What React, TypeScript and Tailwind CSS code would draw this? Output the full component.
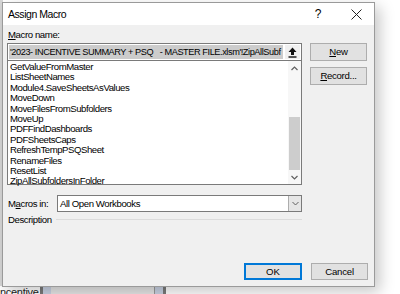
import React from "react";

const items = [
  "GetValueFromMaster",
  "ListSheetNames",
  "Module4.SaveSheetsAsValues",
  "MoveDown",
  "MoveFilesFromSubfolders",
  "MoveUp",
  "PDFFindDashboards",
  "PDFSheetsCaps",
  "RefreshTempPSQSheet",
  "RenameFiles",
  "ResetList",
  "ZipAllSubfoldersInFolder",
];

const font = { fontFamily: '"Liberation Sans", Arial, sans-serif' };

export default function App() {
  return (
    <div className="relative w-[400px] h-[294px] overflow-hidden bg-white" style={font}>
      {/* background: excel left strip */}
      <div className="absolute left-0 top-0 w-[3px] h-[294px] bg-[#d6d6d6]" />
      {/* background: bottom strip */}
      <div className="absolute left-0 top-[286px] w-[400px] h-[8px] flex">
        <div className="w-[40px] h-full bg-white text-[11px] tracking-[-0.3px] leading-[8px] text-[#222] overflow-hidden pt-[2px] whitespace-nowrap">
          ncentive
        </div>
        <div className="w-[3px] h-full bg-[#7a7a7a]" />
        <div className="w-[8px] h-full bg-[#c9d2e3]" />
        <div className="w-[103px] h-full bg-[#e6e6e6]" />
        <div className="w-[1px] h-full bg-[#9a9a9a]" />
        <div className="w-[8px] h-full bg-[#c9d2e3]" />
        <div className="w-[3px] h-full bg-[#7a7a7a]" />
        <div className="flex-1 h-full bg-white" />
      </div>

      {/* dialog window */}
      <div className="absolute left-[2px] top-[2px] w-[373px] h-[285px] border border-[#9a9a9a] bg-[#f0f0f0] shadow-[5px_5px_14px_rgba(0,0,0,0.22)] flex flex-col text-[#000]">
        {/* title bar */}
        <div className="h-[22px] bg-white flex items-center shrink-0">
          <div className="pl-[5px] text-[10.5px] tracking-[-0.45px] leading-none flex-1 whitespace-nowrap">Assign Macro</div>
          <div className="w-[16px] text-center text-[12px] leading-none mr-[22px]">?</div>
          <div className="w-[16px] flex items-center justify-center mr-[10px]">
            <svg width="11" height="11" viewBox="0 0 11 11">
              <path d="M0.5 0.5 L10.5 10.5 M10.5 0.5 L0.5 10.5" stroke="#222" strokeWidth="1" />
            </svg>
          </div>
        </div>

        {/* body */}
        <div className="flex-1 flex flex-col pl-[4px] pr-[6px]">
          <div className="flex gap-[8px]">
            {/* left column */}
            <div className="w-[295px] flex flex-col">
              <div className="mt-[3px] h-[13px] text-[9.6px] tracking-[-0.4px] leading-[13px] pl-[1px] whitespace-nowrap">
                <span className="underline">M</span>acro name:
              </div>
              <div className="mt-[2px] h-[18px] border border-[#7a7a7a] bg-white flex items-center pl-[1px] pr-[1px]">
                <div className="flex-1 min-w-0 h-[14px] bg-[#cccccc] text-[9.2px] tracking-[-0.42px] leading-[14px] whitespace-nowrap overflow-hidden pl-[1px]">
                  '2023- INCENTIVE SUMMARY + PSQ&nbsp;&nbsp; - MASTER FILE.xlsm'!ZipAllSubf
                </div>
                <div className="w-[15px] h-[14px] ml-[2px] shrink-0 flex items-center justify-center bg-[#f0f0f0]">
                  <svg width="9" height="11" viewBox="0 0 9 11">
                    <path d="M4.5 0.5 L8.5 5 L6 5 L6 8 L3 8 L3 5 L0.5 5 Z" fill="#111" />
                    <rect x="0.5" y="9.3" width="8" height="1.4" fill="#111" />
                  </svg>
                </div>
              </div>
              {/* list */}
              <div className="h-[124px] border-x border-b border-[#7a7a7a] bg-white flex">
                <div className="flex-1 pt-[1px] pl-[2px]">
                  {items.map((t) => (
                    <div key={t} className="text-[9.6px] tracking-[-0.45px] leading-[10.4px] h-[10.4px] whitespace-nowrap">
                      {t}
                    </div>
                  ))}
                </div>
                <div className="w-[13px] flex flex-col bg-[#f7f7f7]">
                  <div className="h-[14px] flex items-center justify-center">
                    <svg width="7" height="5" viewBox="0 0 7 5">
                      <path d="M0.5 4 L3.5 1 L6.5 4" stroke="#606060" strokeWidth="1.2" fill="none" />
                    </svg>
                  </div>
                  <div className="h-[42px]" />
                  <div className="h-[53px] mx-[1px] bg-[#cdcdcd]" />
                  <div className="flex-1 flex items-center justify-center">
                    <svg width="7" height="5" viewBox="0 0 7 5">
                      <path d="M0.5 1 L3.5 4 L6.5 1" stroke="#606060" strokeWidth="1.2" fill="none" />
                    </svg>
                  </div>
                </div>
              </div>
            </div>
            {/* right column */}
            <div className="w-[57px] flex flex-col pt-[18px] gap-[6px]">
              <div className="h-[18px] bg-[#e1e1e1] border border-[#adadad] text-[9.6px] tracking-[-0.3px] leading-[16px] text-center">
                <span className="underline">N</span>ew
              </div>
              <div className="h-[18px] bg-[#e1e1e1] border border-[#adadad] text-[9.6px] tracking-[-0.3px] leading-[16px] text-center">
                <span className="underline">R</span>ecord...
              </div>
            </div>
          </div>

          {/* macros in */}
          <div className="mt-[10px] w-[295px] flex items-center">
            <div className="w-[50px] shrink-0 text-[9.6px] tracking-[-0.4px] leading-[13px] pl-[1px] whitespace-nowrap">
              M<span className="underline">a</span>cros in:
            </div>
            <div className="flex-1 h-[17px] border border-[#7a7a7a] bg-white flex">
              <div className="flex-1 text-[9.6px] tracking-[-0.4px] leading-[15px] pl-[2px] whitespace-nowrap">All Open Workbooks</div>
              <div className="w-[13px] border-l border-[#adadad] bg-[#e6e6e6] flex items-center justify-center">
                <svg width="7" height="5" viewBox="0 0 7 5">
                  <path d="M0.5 1 L3.5 4 L6.5 1" stroke="#606060" strokeWidth="1" fill="none" />
                </svg>
              </div>
            </div>
          </div>

          {/* description */}
          <div className="mt-[1px] w-[295px] flex items-center">
            <div className="text-[9.6px] tracking-[-0.4px] leading-[13px] pl-[1px] pr-[4px] whitespace-nowrap">Description</div>
            <div className="flex-1 h-[1px] bg-[#dcdcdc]" />
          </div>

          <div className="flex-1" />

          {/* buttons */}
          <div className="flex justify-end gap-[9px] mb-[6px]">
            <div className="w-[58px] h-[17px] bg-[#e1e1e1] border-2 border-[#0078d7] text-[9.6px] leading-[13px] text-center">
              OK
            </div>
            <div className="w-[57px] h-[17px] bg-[#e1e1e1] border border-[#adadad] text-[9.6px] tracking-[-0.2px] leading-[15px] text-center">
              Cancel
            </div>
          </div>
        </div>
      </div>
    </div>
  );
}
